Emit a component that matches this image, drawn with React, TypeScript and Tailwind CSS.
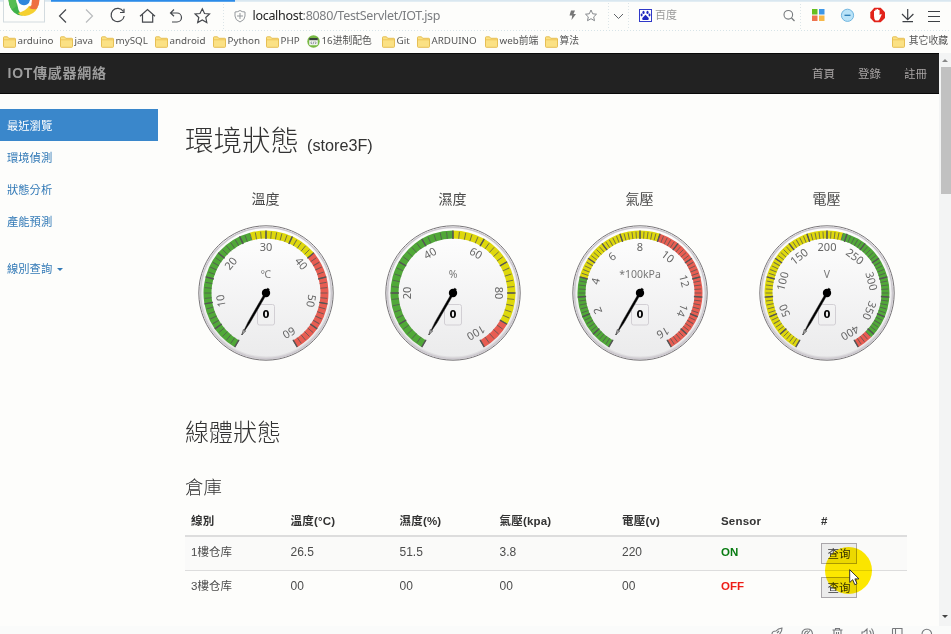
import React from "react";

const CJK = "font-['Liberation_Sans','Noto_Sans_CJK_TC',sans-serif]";

type Band = { from: number; to: number; color: string };
type GaugeProps = { title: string; unit: string; max: number; major: number; minor: number; bands: Band[] };

const GREEN = "#50a838";
const YELLOW = "#ded80c";
const RED = "#e75d52";

function polar(r: number, deg: number) {
  const a = (deg * Math.PI) / 180;
  return [r * Math.sin(a), -r * Math.cos(a)];
}

function arc(r1: number, r2: number, a: number, b: number) {
  const large = b - a > 180 ? 1 : 0;
  const [x1, y1] = polar(r1, a);
  const [x2, y2] = polar(r1, b);
  const [x3, y3] = polar(r2, b);
  const [x4, y4] = polar(r2, a);
  return `M${x1} ${y1}A${r1} ${r1} 0 ${large} 1 ${x2} ${y2}L${x3} ${y3}A${r2} ${r2} 0 ${large} 0 ${x4} ${y4}Z`;
}

function Gauge({ title, unit, max, major, minor, bands }: GaugeProps) {
  const angle = (v: number) => -150 + (v / max) * 300;
  const minors = Array.from({ length: Math.round(max / minor) + 1 }, (_, i) => i * minor);
  const majors = Array.from({ length: Math.round(max / major) + 1 }, (_, i) => i * major);
  const labels = majors.filter((_, i) => i > 0 && i % 2 === 0);
  return (
    <div className="flex w-[187px] flex-col items-center">
      <div className="h-5 text-[14px] leading-5 text-[#484848]">{title}</div>
      <svg width="140" height="140" viewBox="-70 -70 140 140" className="mt-[14px]">
        <defs>
          <linearGradient id="ring" x1="0" y1="0" x2="0" y2="1">
            <stop offset="0" stopColor="#fdfdfd" />
            <stop offset="1" stopColor="#dddcde" />
          </linearGradient>
          <linearGradient id="face" x1="0" y1="0" x2="0" y2="1">
            <stop offset="0" stopColor="#fefefe" />
            <stop offset="1" stopColor="#ebebec" />
          </linearGradient>
        </defs>
        <circle r="67.2" fill="url(#ring)" stroke="#777477" strokeWidth="1" />
        <circle r="65.5" fill="none" stroke="#cdc9cf" strokeWidth="1.6" />
        <circle r="63.5" fill="url(#face)" />
        {bands.map((b) => (
          <path key={b.from} d={arc(62.5, 54.5, angle(b.from), angle(b.to))} fill={b.color} />
        ))}
        {minors.map((v) => (
          <line key={v} x1="0" x2="0" y1="-61.5" y2="-54.5" stroke="#555" strokeOpacity="0.8" strokeWidth="0.9" transform={`rotate(${angle(v)})`} />
        ))}
        {majors.map((v) => (
          <line key={v} x1="0" x2="0" y1="-62.5" y2="-54" stroke="#555" strokeWidth="1.4" transform={`rotate(${angle(v)})`} />
        ))}
        {labels.map((v) => (
          <text key={v} transform={`rotate(${angle(v)})`} y="-42" textAnchor="middle" className="fill-[#666] font-['Noto_Sans',sans-serif] text-[11px]">
            {v}
          </text>
        ))}
        <text y="-15" textAnchor="middle" className="fill-[#777] font-['Noto_Sans','Noto_Sans_CJK_TC',sans-serif] text-[10.500px]">
          {unit}
        </text>
        <rect x="-8.500" y="11.5" width="17" height="20.500" rx="2" fill="none" stroke="#d2cfd4" />
        <g transform="rotate(-150)">
          <path d="M-1.1 5V-34L0 -48.5L1.1 -34V5Z" fill="#000" stroke="#222" strokeWidth="0.4" />
          <path d="M-1.400 -43H1.400L0 -48.500Z" fill="#aaa" stroke="#333" strokeWidth="0.500" />
        </g>
        <circle r="4.200" fill="#000" />
        <text y="25" textAnchor="middle" className="fill-black font-['DejaVu_Sans',sans-serif] text-[10px] font-bold">
          0
        </text>
      </svg>
    </div>
  );
}

const gauges: GaugeProps[] = [
  { title: "溫度", unit: "℃", max: 60, major: 5, minor: 1, bands: [{ from: 0, to: 27, color: GREEN }, { from: 27, to: 40, color: YELLOW }, { from: 40, to: 60, color: RED }] },
  { title: "濕度", unit: "%", max: 100, major: 10, minor: 2, bands: [{ from: 0, to: 50, color: GREEN }, { from: 50, to: 90, color: YELLOW }, { from: 90, to: 100, color: RED }] },
  { title: "氣壓", unit: "*100kPa", max: 16, major: 1, minor: 0.2, bands: [{ from: 0, to: 4, color: GREEN }, { from: 4, to: 9, color: YELLOW }, { from: 9, to: 16, color: RED }] },
  { title: "電壓", unit: "V", max: 400, major: 25, minor: 5, bands: [{ from: 0, to: 220, color: YELLOW }, { from: 220, to: 380, color: GREEN }, { from: 380, to: 400, color: RED }] },
];

function Folder() {
  return (
    <svg width="13" height="12" viewBox="0 0 13 12" className="shrink-0">
      <path d="M.5 10.5V1.500Q.5 .8 1.200 .8H4.500L5.700 2.300H11.800Q12.500 2.300 12.500 3V10.500Q12.500 11.300 11.800 11.300H1.200Q.5 11.300 .5 10.500Z" fill="#fbe184" stroke="#e6bf55" />
      <path d="M1 3.800H12" stroke="#efc65a" />
    </svg>
  );
}

function Bookmark({ name, width }: { name: string; width: string }) {
  return (
    <div className={`flex shrink-0 items-center gap-[2px] whitespace-nowrap ${width}`}>
      {name === "16进制配色" ? (
        <svg width="13" height="13" viewBox="0 0 13 13" className="shrink-0">
          <circle cx="6.5" cy="6.5" r="6.2" fill="#78b943" />
          <rect x="2.2" y="3" width="8.6" height="7.2" rx="1" fill="#eef3ea" />
          <path d="M2.2 3H10.8V5.2H2.2Z" fill="#37423a" />
          <path d="M5 6.7L3.7 7.8L5 8.9M8 6.7L9.3 7.8L8 8.9M7 6.5L6 9.2" stroke="#557" strokeWidth=".6" fill="none" />
        </svg>
      ) : (
        <Folder />
      )}
      <span>{name}</span>
    </div>
  );
}

const bookmarks = [
  { name: "arduino", width: "w-[57px]" },
  { name: "java", width: "w-[41px]" },
  { name: "mySQL", width: "w-[54px]" },
  { name: "android", width: "w-[58px]" },
  { name: "Python", width: "w-[53px]" },
  { name: "PHP", width: "w-[41px]" },
  { name: "16进制配色", width: "w-[75px]" },
  { name: "Git", width: "w-[35px]" },
  { name: "ARDUINO", width: "w-[68px]" },
  { name: "web前端", width: "w-[60px]" },
  { name: "算法", width: "w-[40px]" },
];

function BrowserChrome() {
  return (
    <div className="h-[53px] shrink-0 overflow-hidden bg-[#fdfdfb] font-['Noto_Sans','Noto_Sans_CJK_SC',sans-serif]">
      <svg width="951" height="31" viewBox="0 0 951 31" fill="none" className="block">
        <path d="M0 .8H951" stroke="#d9e7f0" strokeWidth="2" />
        <path d="M51 .7H235" stroke="#2b8be9" strokeWidth="2" />
        <rect x="3.5" y="-2" width="41" height="24" fill="#fdfdfb" stroke="#d3dbdf" />
        <path d="M8.500 0Q9 8 14 12.500Q18 16 23 15.500Q17 12 17 0Z" fill="#3fb24a" />
        <path d="M8.500 0Q9 5 11.500 9.500Q18 7 17.500 0Z" fill="#55bd52" />
        <path d="M18 13Q20 16 25 16Q34 15 38 7Q32 5 29 6Q26 11 18 13Z" fill="#f5d030" />
        <path d="M36.500 9Q39.500 5 39.500 0H31Q33 5 29 8Q33 10 36.500 9Z" fill="#ee7041" />
        <path d="M16 0Q16 3 18.500 5.500Q23 9 27.500 6.500Q31.500 4 32 0Z" fill="#fff" />
        <path d="M18 0Q18.500 3 21 4.500Q24 6 27 4.500Q29.500 3 30 0Z" fill="#2f86dc" />
        <g stroke="#45484d" strokeWidth="1.2">
          <path d="M66 9.5L59.5 16L66 22.5" />
          <path d="M86 9.5L92.500 16L86 22.500" stroke="#b9bbbd" />
          <path d="M123.300 11.500A6.600 6.600 0 1 0 124.200 16M124 8.800V12.500H120" />
          <path d="M140 16.300L147.500 9.500L155 16.300M142.500 14.500V22.200H152.700V14.500" />
          <path d="M174 9.500L170.500 13L174 16.300M170.500 13H177A4.500 4.500 0 0 1 177 22H172" />
          <path d="M202.300 8.800L204.500 13.500L209.500 14L205.800 17.500L206.800 22.500L202.300 20L197.700 22.500L198.800 17.500L195.100 14L200 13.500Z" />
        </g>
        <path d="M223.500 4V30M608.500 3V30M628.500 3V30M800.500 4V30" stroke="#dce5e8" strokeDasharray="1 2" />
        <path d="M240 10.500Q242 12 245 12V16Q245 20 240 22Q235 20 235 16V12Q238 12 240 10.500ZM237 16H243M240 13V19" stroke="#95999d" />
        <path d="M571 10.500L575 10.500L573.500 14H576L571.500 20L572.200 15.500H569.500Z" fill="#777" />
        <path d="M591 10L592.700 13.800L596.500 14.200L593.700 16.900L594.500 20.700L591 18.700L587.500 20.700L588.300 16.900L585.500 14.200L589.300 13.800Z" stroke="#85888c" />
        <path d="M614 14L618.500 18.500L623 14" stroke="#606468" />
        <rect x="639.5" y="9.500" width="12" height="12" fill="#fff" stroke="#3038c8" />
        <g fill="#2028c0">
          <ellipse cx="643.500" cy="12.400" rx="1.100" ry="1.600" />
          <ellipse cx="647.500" cy="12.400" rx="1.100" ry="1.600" />
          <ellipse cx="641.600" cy="15" rx="1" ry="1.400" />
          <ellipse cx="649.500" cy="15" rx="1" ry="1.400" />
          <path d="M645.500 14.800L648.700 18Q649.300 20.200 647.500 20H643.500Q641.700 20.200 642.300 18Z" />
        </g>
        <circle cx="788.300" cy="14.800" r="4.300" stroke="#777a7d" strokeWidth="1.100" />
        <path d="M791.500 18L794.500 21" stroke="#777a7d" strokeWidth="1.200" />
        <path d="M812 9H817.500V14.500H812Z" fill="#66bf20" />
        <path d="M819 9H824.500V14.500H819Z" fill="#3d97e8" />
        <path d="M812 15.500H817.500V21H812Z" fill="#ee7450" />
        <path d="M819 15.500H824.500V21H819Z" fill="#f7b848" />
        <circle cx="847.500" cy="15.300" r="6.100" fill="#b9e3f8" stroke="#6fb5df" />
        <path d="M844.500 15.300H850.500" stroke="#2a7bb5" strokeWidth="1.300" />
        <path d="M874.300 7.800H880.700L885 12.200V18L880.700 22.200H874.300L870.300 18V12.200Z" fill="#e2231a" />
        <path d="M874 16V11Q874.700 10.500 875.200 11V9.800Q876 9.200 876.600 9.800V9.200Q877.500 8.700 878.100 9.200V10Q879 9.500 879.600 10.200V15L881 14Q882 14 881.500 15L879.700 19L878.500 20.500H875.500Q874 19 874 16Z" fill="#fff" />
        <path d="M907.700 9V19.500M902 14L907.700 19.700L913.400 14M902.500 21.700H913M928 11.500H940M928 16.500H940M928 21.500H940" stroke="#3e4145" strokeWidth="1.200" />
        <text x="252.500" y="20" textLength="188" className="fill-[#222] text-[12.500px]">localhost<tspan className="fill-[#7b7d80]">:8080/TestServlet/IOT.jsp</tspan></text>
        <text x="655" y="19" className="fill-[#999] text-[11px]">百度</text>
        <path d="M0 30.500H951" stroke="#d7e4e8" strokeDasharray="1 2" />
      </svg>
      <div className="flex h-[21px] items-center justify-between pr-[3px] pl-[2.500px] text-[9.800px] text-[#555]">
        <div className="flex">{bookmarks.map((b) => <Bookmark key={b.name} {...b} />)}</div>
        <div className="flex items-center gap-[4px] whitespace-nowrap"><Folder /><span>其它收藏</span></div>
      </div>
    </div>
  );
}

function StatusIcons() {
  return (
    <svg width="180" height="7" viewBox="765 627 180 7" fill="none" stroke="#77797c" strokeWidth="1.100" className="mr-[6px]">
      <path d="M772 634Q772 631 776 631Q778 628.500 782 628Q782 632 779.500 634M777 633L779 631" />
      <path d="M802 634Q802 629 807.500 629Q812 629 812.500 634M804.500 634Q805 631 808 631M807 634L810 630.500" />
      <path d="M832.500 630H842.500M834 630V634M841 630V634M835.500 630V628.500H839.500V630M836.500 632V634M838.500 632V634" />
      <path d="M862 634V632H864L867 629V634M869.500 630.500Q871 632 871 634M871.500 628.500Q873.500 631 873.500 634" />
      <path d="M895.500 634V628.500H902V634M892.500 628.500H895.500M892.500 628.500V634" />
      <path d="M922 634A4.800 4.800 0 0 1 931.600 634" />
    </svg>
  );
}

const head = ["線別", "溫度(°C)", "濕度(%)", "氣壓(kpa)", "電壓(v)", "Sensor", "#"];
const rows = [
  ["1樓仓库", "26.5", "51.5", "3.8", "220", "ON"],
  ["3樓仓库", "00", "00", "00", "00", "OFF"],
];
const GRID = "grid grid-cols-[99.500px_109px_100px_122.500px_99px_100px_91px] pl-[6px] text-[11.500px] leading-[17px]";

export default function App() {
  return (
    <div className={`relative flex h-[634px] w-[951px] flex-col overflow-hidden bg-[#fdfdfb] ${CJK}`}>
      <BrowserChrome />
      <div className="flex h-[573px] shrink-0">
        <div className="w-[939px]">
          <nav className="flex h-[41px] items-center justify-between border-y border-[#080808] bg-[#222] pr-[12px] pl-[7.500px] text-[#9d9d9d]">
            <span className="text-[14px] font-bold tracking-[0.750px]">IOT傳感器網絡</span>
            <div className="flex gap-[23px] pt-[2px] text-[11.500px] text-[#a8a4a4]"><span>首頁</span><span>登錄</span><span>註冊</span></div>
          </nav>
          <div className="flex">
            <aside className="w-[158px] shrink-0 pt-[15px] text-[11.300px] text-[#337ab7]">
              <div className="flex h-8 items-center bg-[#3a87cb] pt-[2px] pl-[7px] text-white">最近瀏覽</div>
              <div className="flex h-8 items-center pt-[2px] pl-[7px]">環境偵測</div>
              <div className="flex h-8 items-center pt-[2px] pl-[7px]">狀態分析</div>
              <div className="flex h-8 items-center pt-[2px] pl-[7px]">產能預測</div>
              <div className="mt-4 flex h-8 items-center gap-[5px] pt-px pl-[7px]">線別查詢<span className="border-x-[3px] border-t-[3px] border-x-transparent border-t-[#337ab7]" /></div>
            </aside>
            <main className="ml-[27px] w-[722px]">
              <h1 className="mt-[27px] flex h-10 items-baseline gap-[8px] text-[28.500px] leading-10 font-light text-[#333]">環境狀態<span className="text-[16.200px] font-normal">(store3F)</span></h1>
              <div className="mt-[28px] -ml-[13px] flex w-[748px]">
                {gauges.map((g) => <Gauge key={g.title} {...g} />)}
              </div>
              <h2 className="mt-[54px] h-8 text-[24px] leading-8 font-light text-[#333]">線體狀態</h2>
              <h3 className="mt-[27px] h-6 text-[18.500px] leading-6 font-light text-[#333]">倉庫</h3>
              <div className="mt-[7px] w-[722px]">
                <div className={`${GRID} h-[30px] border-b-2 border-[#ddd] pt-[6px] font-bold tracking-[0.200px] text-[#333]`}>{head.map((h) => <span key={h}>{h}</span>)}</div>
                {rows.map((r, i) => (
                  <div key={r[0]} className={`${GRID} h-[34px] ${i === 0 ? "border-b border-[#ddd] bg-[#fafaf9]" : ""} pt-[7px] text-[#4c4c4c]`}>
                    {r.map((c, j) => (
                      <span key={j} className={c === "ON" ? "font-bold text-[#087b12]" : c === "OFF" ? "font-bold text-[#ee1c16]" : j > 0 ? "text-[12px]" : ""}>{c}</span>
                    ))}
                    <button className="-mt-px h-[21px] w-[36px] border border-[#aaa6aa] bg-[#ececec] text-[11.500px] leading-[18px] text-[#333]">查询</button>
                  </div>
                ))}
              </div>
            </main>
          </div>
        </div>
        <div className="flex w-[12px] flex-col items-center bg-[#f3f4f4]">
          <div className="flex h-[14px] items-center"><span className="border-x-[3px] border-b-[3px] border-x-transparent border-b-[#888]" /></div>
          <div className="ml-[2px] h-[127px] w-[10px] bg-[#c1c1c1]" />
          <div className="mt-auto mb-[8px]"><span className="block border-x-[3px] border-t-[3px] border-x-transparent border-t-[#444]" /></div>
        </div>
      </div>
      <footer className="flex h-[8px] items-end justify-end bg-[#fafbfa]"><StatusIcons /></footer>
      <div className="absolute top-[547px] left-[825px] size-[47px] rounded-full bg-[#ffea00] mix-blend-multiply" />
      <svg width="12" height="18" viewBox="0 0 12 18" className="absolute top-[569px] left-[849px]">
        <path d="M.7 .7V13.500L3.700 10.700L5.800 15.700L8 14.700L5.900 9.900H10Z" fill="#fff" stroke="#222" strokeWidth=".9" />
      </svg>
    </div>
  );
}
